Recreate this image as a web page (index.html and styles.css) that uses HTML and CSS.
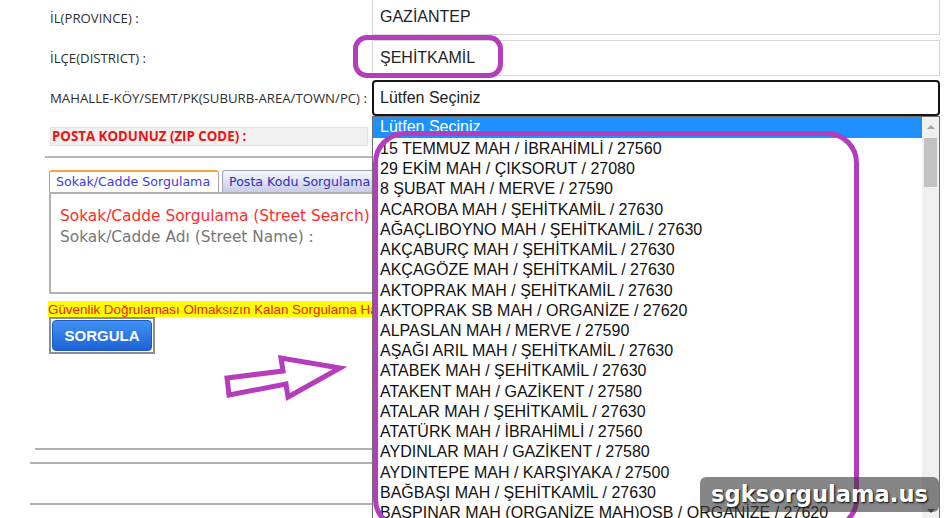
FILE: index.html
```html
<!DOCTYPE html>
<html lang="tr">
<head>
  <meta charset="UTF-8">
  <title>Posta Kodu Sorgulama</title>
  <link rel="stylesheet" href="styles.css">
</head>
<body>
<div class="page">
  <div class="form">
    <div class="row r1">
      <div class="label">İL(PROVINCE) :</div>
      <div class="field f1">GAZİANTEP</div>
    </div>
    <div class="row r2">
      <div class="label">İLÇE(DISTRICT) :</div>
      <div class="field f2">ŞEHİTKAMİL</div>
    </div>
    <div class="row r3">
      <div class="label">MAHALLE-KÖY/SEMT/PK(SUBURB-AREA/TOWN/PC) :</div>
      <div class="field select">Lütfen Seçiniz</div>
    </div>
    <div class="zip">POSTA KODUNUZ (ZIP CODE) :</div>
  </div>

  <div class="sep"></div>

  <div class="tabs">
    <div class="tab active">Sokak/Cadde Sorgulama</div>
    <div class="tab">Posta Kodu Sorgulama</div>
  </div>
  <div class="panel">
    <div class="panel-title">Sokak/Cadde Sorgulama (Street Search)</div>
    <div class="panel-label">Sokak/Cadde Adı (Street Name) :</div>
  </div>

  <div class="warn">Güvenlik Doğrulaması Olmaksızın Kalan Sorgulama Hakkınız : 3</div>
  <div class="btn-frame"><button class="btn">SORGULA</button></div>

  <div class="footer">
    <div class="line l1"></div>
    <div class="line l2"></div>
    <div class="line l3"></div>
  </div>

  <!-- open dropdown -->
  <div class="dropdown">
    <div class="options">
      <div class="opt selected">Lütfen Seçiniz</div>
      <div class="opt">15 TEMMUZ MAH / İBRAHİMLİ / 27560</div>
      <div class="opt">29 EKİM MAH / ÇIKSORUT / 27080</div>
      <div class="opt">8 ŞUBAT MAH / MERVE / 27590</div>
      <div class="opt">ACAROBA MAH / ŞEHİTKAMİL / 27630</div>
      <div class="opt">AĞAÇLIBOYNO MAH / ŞEHİTKAMİL / 27630</div>
      <div class="opt">AKÇABURÇ MAH / ŞEHİTKAMİL / 27630</div>
      <div class="opt">AKÇAGÖZE MAH / ŞEHİTKAMİL / 27630</div>
      <div class="opt">AKTOPRAK MAH / ŞEHİTKAMİL / 27630</div>
      <div class="opt">AKTOPRAK SB MAH / ORGANİZE / 27620</div>
      <div class="opt">ALPASLAN MAH / MERVE / 27590</div>
      <div class="opt">AŞAĞI ARIL MAH / ŞEHİTKAMİL / 27630</div>
      <div class="opt">ATABEK MAH / ŞEHİTKAMİL / 27630</div>
      <div class="opt">ATAKENT MAH / GAZİKENT / 27580</div>
      <div class="opt">ATALAR MAH / ŞEHİTKAMİL / 27630</div>
      <div class="opt">ATATÜRK MAH / İBRAHİMLİ / 27560</div>
      <div class="opt">AYDINLAR MAH / GAZİKENT / 27580</div>
      <div class="opt">AYDINTEPE MAH / KARŞIYAKA / 27500</div>
      <div class="opt">BAĞBAŞI MAH / ŞEHİTKAMİL / 27630</div>
      <div class="opt">BAŞPINAR MAH (ORGANİZE MAH)OSB / ORGANİZE / 27620</div>
    </div>
    <div class="scrollbar">
      <div class="arrow-up"></div>
      <div class="thumb"></div>
      <div class="arrow-down"></div>
    </div>
  </div>

  <!-- annotations -->
  <div class="mark mark-district"></div>
  <div class="mark mark-list"></div>
  <svg class="pointer" width="130" height="52" viewBox="0 0 130 52">
    <polygon points="7,26 63,19 61,6 120,16 68,45 66,32 9,43" fill="#fff" stroke="#b53cbd" stroke-width="5" stroke-linejoin="miter"/>
  </svg>

  <div class="watermark">sgksorgulama.us</div>
</div>
</body>
</html>
```

FILE: styles.css
```css
body {
  margin: 0;
  background: #fff;
  font-family: "Open Sans", "Noto Sans", sans-serif;
}
.page {
  position: relative;
  width: 945px;
  height: 518px;
  overflow: hidden;
}

/* form rows */
.form {
  padding-left: 50px;
}
.row {
  display: flex;
  align-items: center;
}
.r2 { margin-top: 5px; }
.r3 { margin-top: 4px; }
.label {
  width: 322px;
  font-size: 13.2px;
  color: #2e2e2e;
  white-space: nowrap;
}
.field {
  box-sizing: border-box;
  width: 568px;
  height: 36px;
  display: flex;
  align-items: center;
  padding-left: 7px;
  border: 1px solid #d6d6d6;
  font: 16px "Liberation Sans", Arial, sans-serif;
  color: #222;
}
.f1 {
  height: 35px;
  border-top: none;
}
.select {
  border: 2px solid #151515;
  border-radius: 4px;
  padding-left: 6px;
}
.zip {
  box-sizing: border-box;
  width: 318px;
  height: 19px;
  margin-top: 11px;
  padding-left: 1px;
  background: #f0f0f0;
  border: 1px solid #e4e4e4;
  color: #f01010;
  font-size: 13.3px;
  font-weight: bold;
  line-height: 17px;
  white-space: nowrap;
}

.sep {
  margin: 10px 0 0 45px;
  width: 400px;
  border-top: 2px solid #b8b8b8;
}

/* tabs */
.tabs {
  display: flex;
  align-items: flex-end;
  gap: 3px;
  margin: 12px 0 0 49px;
  height: 22px;
}
.tab {
  box-sizing: border-box;
  height: 22px;
  padding: 0 6px;
  border: 1px solid #9fa3b8;
  border-bottom: none;
  border-radius: 3px 3px 0 0;
  background: linear-gradient(#f6f7fc, #c8cce6);
  color: #2e2eb8;
  font: 12.6px "DejaVu Sans", Verdana, sans-serif;
  line-height: 21px;
  white-space: nowrap;
}
.tab.active {
  width: 170px;
  background: #fff;
  border-top: 2px solid #f5a540;
  color: #3c3cdc;
  line-height: 20px;
}
.panel {
  box-sizing: border-box;
  width: 420px;
  height: 102px;
  margin-left: 49px;
  padding: 12px 0 0 9px;
  border: 2px solid #b2b2b2;
  font: 15.4px "DejaVu Sans", Verdana, sans-serif;
  line-height: 20.5px;
  white-space: nowrap;
}
.panel-title { color: #ff2b2b; }
.panel-label { color: #777; }

.warn {
  width: 520px;
  height: 16px;
  margin: 7px 0 0 48px;
  background: #ffff00;
  color: #f0200a;
  font: 13.4px "Liberation Sans", Tahoma, sans-serif;
  line-height: 17px;
  white-space: nowrap;
  overflow: hidden;
}
.btn-frame {
  display: inline-block;
  margin-left: 49px;
  padding: 1px;
  border: 2px solid #8c8c8c;
}
.btn {
  display: block;
  width: 100px;
  height: 31px;
  border: 1px solid #1c58c4;
  border-radius: 4px;
  background: linear-gradient(#3f92f3, #1d62d5);
  color: #fff;
  font: bold 15px "Liberation Sans", Arial, sans-serif;
  padding: 0;
}

.footer {
  padding-top: 94px;
}
.line {
  width: 420px;
  border-top: 2px solid #b0b0b0;
}
.l1 { margin-left: 35px; }
.l2 { margin: 12px 0 0 30px; }
.l3 { margin: 39px 0 0 30px; }

/* open dropdown list */
.dropdown {
  position: absolute;
  left: 372px;
  top: 116px;
  width: 568px;
  height: 404px;
  box-sizing: border-box;
  border: 1px solid #6f6f6f;
  background: #fff;
  display: flex;
}
.options {
  flex: 1;
  font: 16px "Liberation Sans", Arial, sans-serif;
  color: #111;
}
.opt {
  height: 20.22px;
  line-height: 21px;
  padding-left: 7px;
  white-space: nowrap;
}
.opt.selected {
  height: 21px;
  line-height: 20px;
  background: #1e90ff;
  color: #fff;
}
.scrollbar {
  position: relative;
  width: 17px;
  background: #f0f0f0;
}
.arrow-up, .arrow-down {
  position: absolute;
  left: 5px;
  width: 0;
  height: 0;
  border-left: 4px solid transparent;
  border-right: 4px solid transparent;
}
.arrow-up {
  top: 8px;
  border-bottom: 4px solid #a3a3a3;
}
.arrow-down {
  bottom: 6px;
  border-top: 4px solid #505050;
}
.thumb {
  position: absolute;
  left: 2px;
  top: 21px;
  width: 13px;
  height: 49px;
  background: #c2c2c2;
}

/* magenta annotations */
.mark {
  position: absolute;
  box-sizing: border-box;
  border: 5px solid #b53cbd;
}
.mark-district {
  left: 353px;
  top: 35px;
  width: 150px;
  height: 43px;
  border-radius: 14px;
}
.mark-list {
  left: 373px;
  top: 131px;
  width: 486px;
  height: 400px;
  border-radius: 32px;
}
.pointer {
  position: absolute;
  left: 220px;
  top: 352px;
}

.watermark {
  position: absolute;
  left: 700px;
  top: 477px;
  width: 239px;
  height: 35px;
  border-radius: 6px;
  background: rgba(60, 60, 60, 0.62);
  color: #fff;
  font: bold 22.6px "DejaVu Sans", Verdana, sans-serif;
  line-height: 35px;
  text-align: center;
  text-shadow: 1px 1px 2px #000;
}
```
